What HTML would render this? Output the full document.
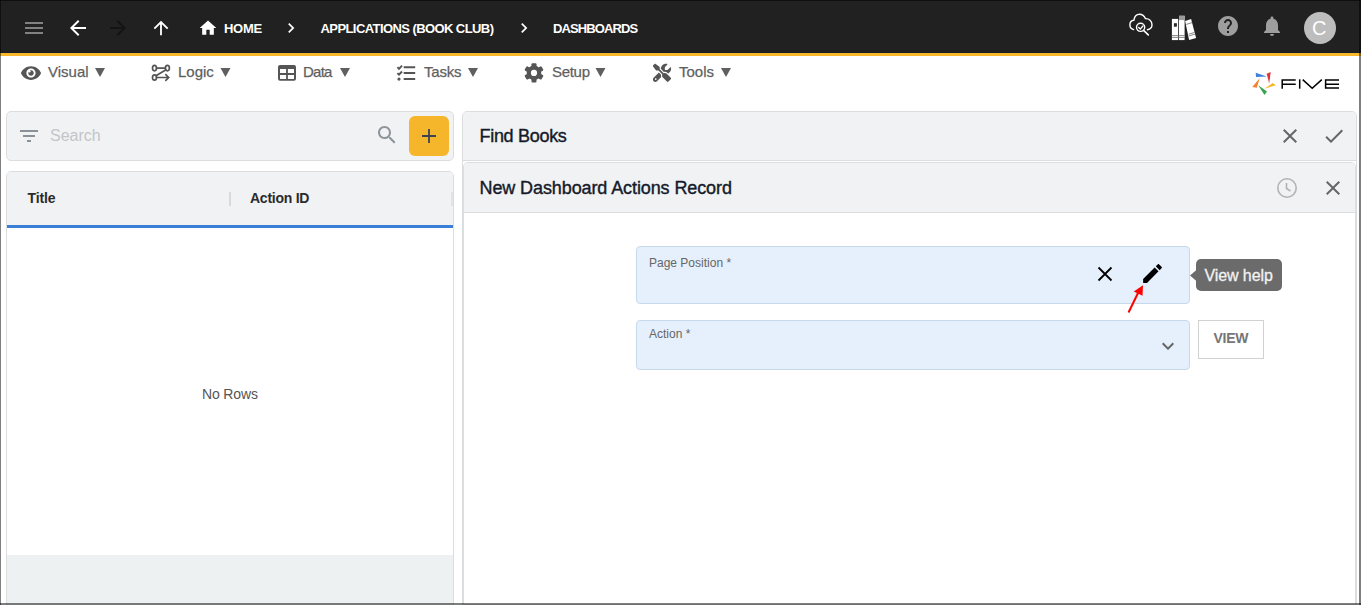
<!DOCTYPE html>
<html><head><meta charset="utf-8">
<style>
*{box-sizing:border-box;margin:0;padding:0}
html,body{width:1361px;height:605px;overflow:hidden;background:#fff;font-family:"Liberation Sans",sans-serif}
.a{position:absolute}
.t{position:absolute;white-space:nowrap;line-height:1}
svg{position:absolute;overflow:visible}
</style></head><body>
<!-- header -->
<div class="a" style="left:0;top:0;width:1361px;height:53px;background:#212121"></div>
<div class="a" style="left:0;top:52px;width:1361px;height:1px;background:#181c24"></div>
<div class="a" style="left:0;top:53px;width:1361px;height:3px;background:#f8b62a"></div>

<!-- header icons -->
<svg style="left:22px;top:16px" width="24" height="24" viewBox="0 0 24 24"><path fill="#828282" d="M3 18h18v-2H3v2zm0-5h18v-2H3v2zm0-7v2h18V6H3z"/></svg>
<svg style="left:66px;top:16px" width="24" height="24" viewBox="0 0 24 24"><path fill="#fff" d="M20 11H7.83l5.59-5.59L12 4l-8 8 8 8 1.41-1.41L7.83 13H20v-2z"/></svg>
<svg style="left:106px;top:16px" width="24" height="24" viewBox="0 0 24 24"><path fill="#141414" d="M12 4l-1.41 1.41L16.17 11H4v2h12.17l-5.58 5.59L12 20l8-8z"/></svg>
<svg style="left:150px;top:17px" width="22" height="22" viewBox="0 0 24 24"><path fill="#fff" d="M4 12l1.41 1.41L11 7.83V20h2V7.83l5.58 5.59L20 12l-8-8-8 8z"/></svg>
<svg style="left:198px;top:18px" width="20" height="20" viewBox="0 0 24 24"><path fill="#fff" d="M10 20v-6h4v6h5v-8h3L12 3 2 12h3v8z"/></svg>

<div class="t" style="left:224px;top:22px;font-size:13px;font-weight:bold;color:#fff;letter-spacing:-0.3px">HOME</div>
<svg style="left:280.8px;top:18px" width="20" height="20" viewBox="0 0 24 24"><path fill="#fff" d="M10 6L8.59 7.41 13.17 12l-4.58 4.59L10 18l6-6z"/></svg>
<div class="t" style="left:320.5px;top:22px;font-size:13px;font-weight:bold;color:#fff;letter-spacing:-0.58px">APPLICATIONS (BOOK CLUB)</div>
<svg style="left:513.8px;top:18px" width="20" height="20" viewBox="0 0 24 24"><path fill="#fff" d="M10 6L8.59 7.41 13.17 12l-4.58 4.59L10 18l6-6z"/></svg>
<div class="t" style="left:553px;top:22px;font-size:13px;font-weight:bold;color:#fff;letter-spacing:-0.9px">DASHBOARDS</div>

<!-- right header icons -->
<svg style="left:0;top:0" width="1361" height="605"><g fill="none" stroke="#fff" stroke-width="1.4" stroke-linecap="round">
<path d="M1133.6 29.6C1131.4 29.1 1129.9 27.1 1129.9 24.8C1129.9 22.3 1131.7 20.4 1133.9 20.2C1134.4 16.8 1136.5 14.3 1139.5 14.3C1142.3 14.3 1144.4 16.2 1145.4 18.6C1149.1 18.3 1152 21.1 1152 24.8C1152 27.3 1150.2 29.3 1147.4 29.7"/>
<circle cx="1140.6" cy="27.3" r="4.1" fill="#212121"/>
<path d="M1143.8 30.6L1148.3 34.9" stroke-width="1.6"/>
<path d="M1138.7 27.6l1.6 1.5 2.6-3.1"/>
</g>
<g fill="#fff"><rect x="1171.9" y="18.9" width="6.3" height="21.2"/><rect x="1179" y="15.8" width="5.6" height="24.3"/><path d="M1185.1 20.9L1191.1 18.9L1196.1 38.1L1189.1 40.1z"/></g>
<rect x="1173.9" y="23.2" width="3" height="3.5" fill="#2a2a2a"/>
<rect x="1179" y="15.8" width="5.6" height="4.3" fill="#9a9a9a"/>
<g stroke="#6a6a6a" stroke-width="0.8"><path d="M1171.9 35.6H1184.6M1171.9 37.4H1184.6M1186.2 24.4L1192.2 22.6M1188.7 34.2L1194.7 32.4M1189.1 35.9L1195.1 34.1"/></g>
</svg>
<svg style="left:1216px;top:14px" width="24" height="24" viewBox="0 0 24 24"><path fill="#9e9e9e" d="M12 2C6.48 2 2 6.48 2 12s4.48 10 10 10 10-4.48 10-10S17.52 2 12 2zm1 17h-2v-2h2v2zm2.07-7.750l-.9.92C13.45 12.9 13 13.5 13 15h-2v-.5c0-1.1.45-2.1 1.17-2.83l1.24-1.26c.37-.36.59-.86.59-1.41 0-1.1-.9-2-2-2s-2 .9-2 2H8c0-2.21 1.79-4 4-4s4 1.79 4 4c0 .88-.36 1.68-.93 2.25z"/></svg>
<svg style="left:1260px;top:14px" width="24" height="24" viewBox="0 0 24 24"><path fill="#9e9e9e" d="M12 22c1.1 0 2-.9 2-2h-4c0 1.1.89 2 2 2zm6-6v-5c0-3.07-1.64-5.64-4.5-6.32V4c0-.83-.67-1.5-1.5-1.5s-1.5.67-1.5 1.5v.68C7.63 5.36 6 7.92 6 11v5l-2 2v1h16v-1l-2-2z"/></svg>
<div class="a" style="left:1304px;top:12px;width:32px;height:32px;border-radius:50%;background:#bdbdbd"></div>
<div class="t" style="left:1312px;top:18px;font-size:20px;color:#fff">C</div>

<!-- toolbar -->
<svg style="left:20px;top:62px" width="22" height="22" viewBox="0 0 24 24"><path fill="#555" d="M12 4.5C7 4.5 2.730 7.61 1 12c1.73 4.39 6 7.5 11 7.5s9.27-3.11 11-7.5c-1.73-4.39-6-7.5-11-7.5zM12 17c-2.76 0-5-2.24-5-5s2.24-5 5-5 5 2.24 5 5-2.24 5-5 5zm0-8c-1.66 0-3 1.34-3 3s1.34 3 3 3 3-1.34 3-3-1.34-3-3-3z"/><circle cx="10.2" cy="10.2" r="1.3" fill="#fff"/></svg>
<div class="t" style="left:48px;top:64px;font-size:15px;color:#5f5f5f;-webkit-text-stroke:0.25px #5f5f5f">Visual</div>

<div class="t" style="left:178px;top:64px;font-size:15px;color:#5f5f5f;-webkit-text-stroke:0.25px #5f5f5f">Logic</div>

<div class="t" style="left:303px;top:64px;font-size:15px;color:#5f5f5f;-webkit-text-stroke:0.25px #5f5f5f;letter-spacing:-0.75px">Data</div>

<div class="t" style="left:424px;top:64px;font-size:15px;color:#5f5f5f;-webkit-text-stroke:0.25px #5f5f5f;letter-spacing:-0.2px">Tasks</div>

<div class="t" style="left:552px;top:64px;font-size:15px;color:#5f5f5f;-webkit-text-stroke:0.25px #5f5f5f;letter-spacing:-0.3px">Setup</div>

<div class="t" style="left:679px;top:64px;font-size:15px;color:#5f5f5f;-webkit-text-stroke:0.25px #5f5f5f">Tools</div>

<svg style="left:0;top:0" width="1361" height="605"><g fill="#5f5f5f"><path d="M95 68H105L100 77z"/><path d="M220.5 68H230.5L225.5 77z"/><path d="M340 68H350L345 77z"/><path d="M468 68H478L473 77z"/><path d="M595.5 68H605.5L600.5 77z"/><path d="M721 68H731L726 77z"/></g>
<g fill="none" stroke="#555" stroke-width="1.7" stroke-linecap="round">
<ellipse cx="154.5" cy="68.1" rx="2" ry="2.7"/><ellipse cx="167.4" cy="68.1" rx="2" ry="2.7"/><ellipse cx="154.5" cy="77.5" rx="2" ry="2.7"/>
<path d="M156.5 68.1H165.4M165.6 70L156.4 75.6M156.5 77.5H168.5M165.8 74.6L168.7 77.5L165.8 80.4"/>
</g>
<path fill="#555" fill-rule="evenodd" d="M280 65h14a2 2 0 0 1 2 2v11.8a2 2 0 0 1-2 2h-14a2 2 0 0 1-2-2v-11.8a2 2 0 0 1 2-2zM280 69.1v3.8h6.1v-3.8zM287.9 69.1v3.8h6.1v-3.8zM280 74.9v4h6.1v-4zM287.9 74.9v4h6.1v-4z"/>
<g fill="none" stroke="#555" stroke-width="1.9"><path d="M397.4 67.2l1.6 1.6 3-3.2M397.4 73.1l1.6 1.6 3-3.2"/></g>
<circle cx="399" cy="79.1" r="1.6" fill="#555"/>
<g stroke="#555" stroke-width="2"><path d="M403.7 67.3H415.2M403.7 73.1H415.2M403.7 79.1H415.2"/></g>
<g fill="#555"><circle cx="534" cy="72.9" r="7.3"/>
<rect x="531.5" y="63.2" width="5" height="19.4" rx="1"/>
<rect x="531.5" y="63.2" width="5" height="19.4" rx="1" transform="rotate(60 534 72.9)"/>
<rect x="531.5" y="63.2" width="5" height="19.4" rx="1" transform="rotate(120 534 72.9)"/></g>
<circle cx="534" cy="72.9" r="3.1" fill="#fff"/>
<path fill="#555" transform="translate(652.9 63.7) scale(0.03555)" d="M78.6 5C69.1-2.4 55.6-1.5 47 7L7 47c-8.5 8.5-9.4 22-2.1 31.6l80 104c4.5 5.9 11.6 9.4 19 9.4h54.1l109 109c-14.7 29-10 65.4 14.3 89.6l112 112c12.5 12.5 32.8 12.5 45.3 0l64-64c12.5-12.5 12.5-32.8 0-45.3l-112-112c-24.200-24.2-60.6-29-89.6-14.3l-109-109V104c0-7.5-3.5-14.5-9.4-19L78.6 5zM19.9 396.1C7.2 408.8 0 426.1 0 444.1C0 481.6 30.4 512 67.9 512c18 0 35.3-7.2 48-19.9L233.7 374.3c-7.8-20.9-9-43.6-3.6-65.1l-61.7-61.7L19.9 396.1zM512 144c0-10.5-1.1-20.7-3.2-30.5c-2.4-11.2-16.1-14.1-24.2-6l-63.9 63.9c-3 3-7.1 4.7-11.3 4.7H352c-8.8 0-16-7.2-16-16V102.6c0-4.2 1.7-8.3 4.7-11.3l63.9-63.9c8.1-8.1 5.2-21.8-6-24.2C388.7 1.1 378.5 0 368 0C288.5 0 224 64.5 224 144l0 .8 85.3 85.3c36-9.1 75.8 .5 104 28.7L429 274.5c49-23 83-72.8 83-130.5zM56 432a24 24 0 1 1 48 0 24 24 0 1 1 -48 0z"/>
</svg>
<!-- left panel -->
<div class="a" style="left:6px;top:111px;width:448px;height:50px;background:#f1f2f4;border:1px solid #dcdddf;border-radius:5px"></div>
<svg style="left:17px;top:124px" width="24" height="24" viewBox="0 0 24 24"><path fill="#8a9199" d="M10 18h4v-2h-4v2zM3 6v2h18V6H3zm3 7h12v-2H6v2z"/></svg>
<div class="t" style="left:50px;top:128px;font-size:16px;color:#c3c5c8">Search</div>
<svg style="left:375px;top:123px" width="24" height="24" viewBox="0 0 24 24"><path fill="#8d959c" d="M15.5 14h-.79l-.28-.27C15.410 12.59 16 11.11 16 9.5 16 5.91 13.09 3 9.5 3S3 5.91 3 9.5 5.91 16 9.5 16c1.61 0 3.09-.59 4.23-1.57l.27.28v.79l5 4.99L20.49 19l-4.99-5zm-6 0C7.01 14 5 11.99 5 9.5S7.01 5 9.5 5 14 7.01 14 9.5 11.99 14 9.5 14z"/></svg>
<div class="a" style="left:409px;top:116px;width:40px;height:40px;background:#f5b62b;border-radius:6px"></div>
<svg style="left:409px;top:116px" width="40" height="40"><path d="M20 13v14M13 20h14" stroke="#3d4450" stroke-width="1.8"/></svg>

<div class="a" style="left:6px;top:171px;width:448px;height:434px;background:#fff;border:1px solid #dcdddf;border-radius:5px 5px 0 0"></div>
<div class="a" style="left:7px;top:172px;width:446px;height:53px;background:#f1f2f4;border-radius:4px 4px 0 0"></div>
<div class="a" style="left:7px;top:225px;width:446px;height:3px;background:#3a7fd5"></div>
<div class="t" style="left:27.5px;top:191px;font-size:14px;font-weight:bold;color:#2b2b2b;letter-spacing:-0.15px">Title</div>
<div class="a" style="left:229px;top:192px;width:2px;height:14px;background:#d9dadc"></div>
<div class="t" style="left:250px;top:191px;font-size:14px;font-weight:bold;color:#2b2b2b;letter-spacing:-0.25px">Action ID</div>
<div class="a" style="left:451px;top:192px;width:2px;height:14px;background:#e2e3e5"></div>
<div class="t" style="left:202px;top:387px;font-size:14px;color:#555;letter-spacing:-0.15px">No Rows</div>
<div class="a" style="left:7px;top:555px;width:446px;height:50px;background:#eef1f2"></div>

<!-- right panel -->
<div class="a" style="left:462px;top:111px;width:895px;height:494px;background:#fff;border:1px solid #dcdddf;border-radius:5px 5px 0 0"></div>
<div class="a" style="left:463px;top:112px;width:893px;height:48px;background:#f1f2f4;border-radius:4px 4px 0 0"></div>
<div class="a" style="left:463px;top:160px;width:893px;height:1px;background:#dcdddf"></div>
<div class="t" style="left:479.5px;top:127px;font-size:18px;color:#151b2a;letter-spacing:-0.3px;-webkit-text-stroke:0.4px #151b2a">Find Books</div>
<svg style="left:1278px;top:124px" width="24" height="24" viewBox="0 0 24 24"><path fill="#666" d="M19 6.41L17.59 5 12 10.59 6.41 5 5 6.41 10.59 12 5 17.59 6.41 19 12 13.41 17.590 19 19 17.59 13.41 12z"/></svg>
<svg style="left:1321.8px;top:124px" width="24" height="24" viewBox="0 0 24 24"><path fill="#666" d="M9 16.17L4.83 12l-1.42 1.41L9 19 21 7l-1.41-1.41z"/></svg>

<div class="a" style="left:463px;top:162px;width:893px;height:443px;background:#fff;border:1px solid #dcdddf;border-radius:5px 5px 0 0"></div>
<div class="a" style="left:464px;top:163px;width:891px;height:49px;background:#f1f2f4;border-radius:4px 4px 0 0"></div>
<div class="a" style="left:464px;top:212px;width:891px;height:1px;background:#dcdddf"></div>
<div class="t" style="left:479.5px;top:179px;font-size:18px;color:#151b2a;letter-spacing:-0.1px;-webkit-text-stroke:0.4px #151b2a">New Dashboard Actions Record</div>
<svg style="left:1275px;top:176px" width="24" height="24" viewBox="0 0 24 24"><g fill="none" stroke="#b3b3b3" stroke-width="1.6"><circle cx="12" cy="12" r="9.2"/><path d="M11.5 7v5.5l4 2.5"/></g></svg>
<svg style="left:1321px;top:176px" width="24" height="24" viewBox="0 0 24 24"><path fill="#666" d="M19 6.41L17.59 5 12 10.59 6.41 5 5 6.41 10.59 12 5 17.59 6.41 19 12 13.41 17.590 19 19 17.59 13.41 12z"/></svg>

<!-- form -->
<div class="a" style="left:636px;top:246px;width:554px;height:58px;background:#e5f0fc;border:1px solid #c6d9ec;border-radius:4px"></div>
<div class="t" style="left:649px;top:257px;font-size:12px;color:#666">Page Position *</div>
<svg style="left:1093px;top:262px" width="24" height="24" viewBox="0 0 24 24"><path d="M5.5 5.5l13 13M18.5 5.5l-13 13" stroke="#000" stroke-width="1.8"/></svg>
<svg style="left:1139.6px;top:261.4px" width="25" height="25" viewBox="0 0 24 24"><path fill="#000" d="M3 17.25V21h3.75L17.81 9.94l-3.75-3.75L3 17.25zM20.71 7.04c.39-.39.39-1.02 0-1.41l-2.34-2.34c-.39-.39-1.02-.39-1.41 0l-1.83 1.83 3.75 3.75 1.83-1.830z"/></svg>
<svg style="left:0;top:0" width="1361" height="605"><path d="M1128.5 312.5L1139 291" stroke="#f00" stroke-width="2"/><path d="M1143 285.3L1133.8 291.5L1142.5 295.8z" fill="#f00"/></svg>

<div class="a" style="left:1196px;top:259px;width:86px;height:32px;background:#6b6b6b;border-radius:5px"></div>
<svg style="left:0;top:0" width="1361" height="605"><path d="M1190 275.5L1197 269.5V281.5z" fill="#6b6b6b"/></svg>
<div class="t" style="left:1204.5px;top:267.5px;font-size:16px;color:#f2f2f2;-webkit-text-stroke:0.3px #f2f2f2;letter-spacing:-0.1px">View help</div>

<div class="a" style="left:636px;top:320px;width:554px;height:50px;background:#e5f0fc;border:1px solid #c6d9ec;border-radius:4px"></div>
<div class="t" style="left:649px;top:328px;font-size:12px;color:#666">Action *</div>
<svg style="left:1156px;top:334px" width="24" height="24" viewBox="0 0 24 24"><path fill="#666" d="M16.59 8.59L12 13.17 7.41 8.59 6 10l6 6 6-6z"/></svg>
<div class="a" style="left:1198px;top:320px;width:66px;height:39px;background:#fff;border:1px solid #d2d2d2"></div>
<div class="t" style="left:1213.5px;top:331px;font-size:14px;font-weight:bold;color:#757575;letter-spacing:-0.3px">VIEW</div>

<!-- logo -->
<svg style="left:0;top:0" width="1361" height="605">
<path d="M1255.7 72.7L1256 77.1L1266.7 76.6z" fill="#3b82dc"/>
<path d="M1270.7 72L1266.7 73.8L1269.2 83.4z" fill="#e0353a"/>
<path d="M1272.6 83L1275.9 85.2L1264.5 88.7z" fill="#f5b82b"/>
<path d="M1258.2 85.2L1267 91.5L1264.5 95.1z" fill="#3aa352"/>
<path d="M1259.7 78.2L1252.3 87L1256.8 87.8z" fill="#f57f2a"/>
<g fill="none" stroke="#000" stroke-width="1.5">
<path d="M1295.7 80H1282.2V88.7M1282.2 84.3H1295.7"/>
<path d="M1299.7 79.3V88.7"/>
<path d="M1302.7 79.6L1312.2 88.2L1321.8 79.6"/>
<path d="M1339 80H1325.6V88H1339M1325.6 84.3H1339"/>
</g>
</svg>

<!-- window frame -->
<div class="a" style="left:0;top:0;width:1361px;height:1px;background:rgba(0,0,0,.5)"></div>
<div class="a" style="left:0;top:0;width:1px;height:605px;background:rgba(0,0,0,.5)"></div>
<div class="a" style="left:1359px;top:0;width:2px;height:605px;background:rgba(0,0,0,.5)"></div>
<div class="a" style="left:0;top:603px;width:1361px;height:2px;background:rgba(0,0,0,.5)"></div>
</body></html>
